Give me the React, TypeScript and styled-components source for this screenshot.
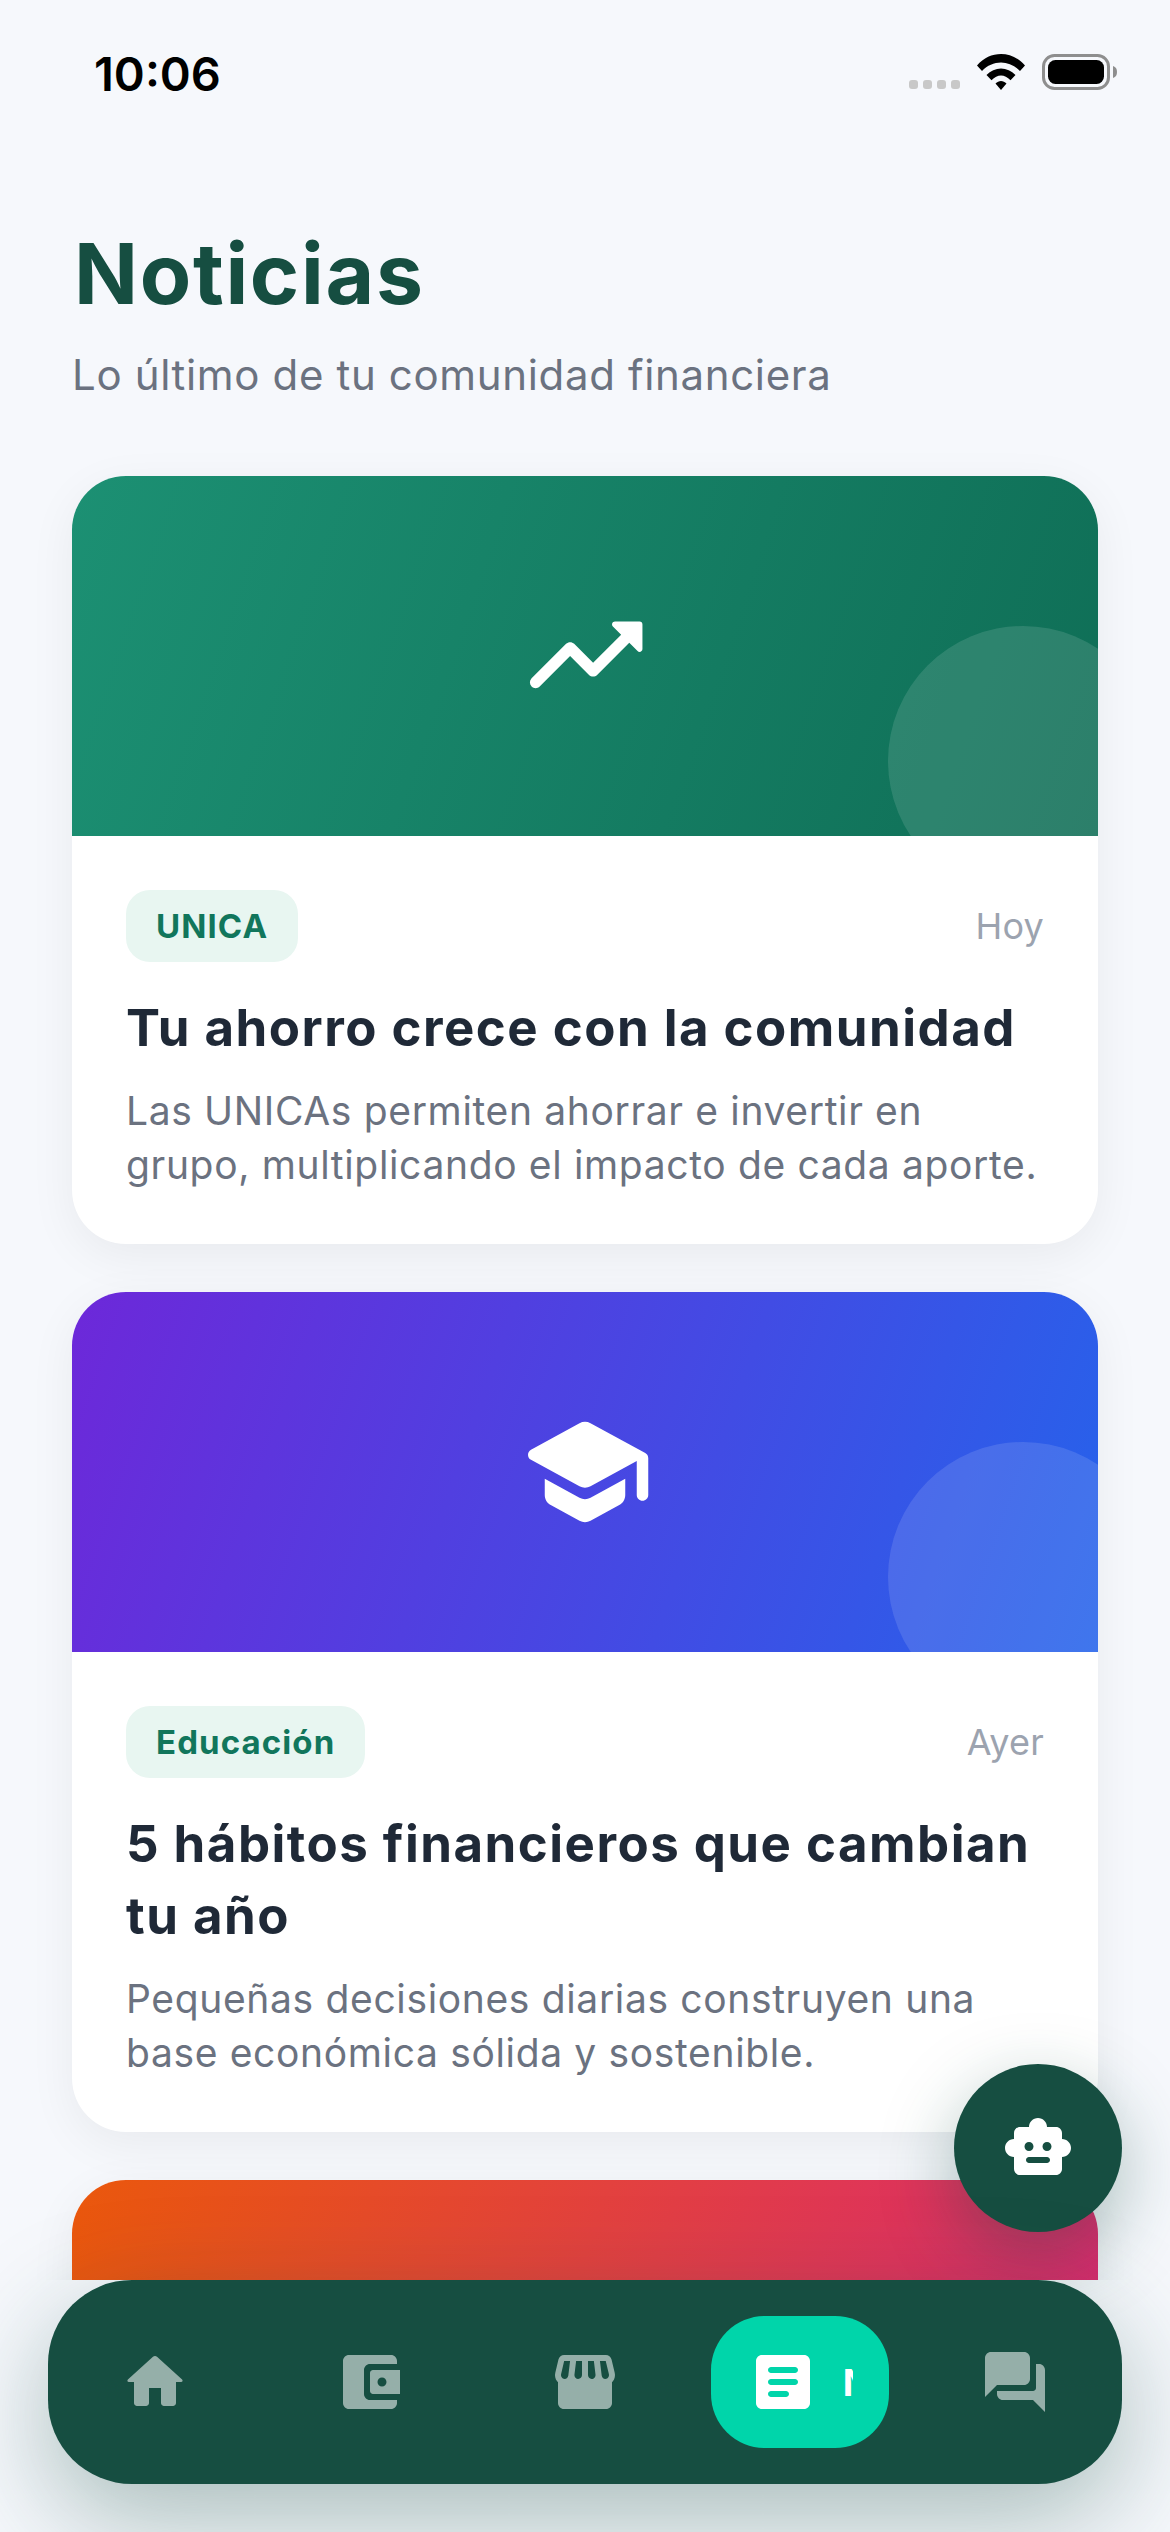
import React, { FC } from "react";
import styled, { createGlobalStyle } from "styled-components";

const FONT = `Inter, "Liberation Sans", sans-serif`;
const GREEN = "#164e41";

const GlobalStyle = createGlobalStyle`
  html, body {
    margin: 0;
    padding: 0;
    background: #f6f8fc;
  }
`;

const ICONS = {
  home: "M10 19v-5h4v5c0 .55.45 1 1 1h3c.55 0 1-.45 1-1v-7h1.7c.46 0 .68-.57.33-.87L12.67 3.6c-.38-.34-.96-.34-1.34 0l-8.36 7.53c-.34.3-.13.87.33.87H5v7c0 .55.45 1 1 1h3c.55 0 1-.45 1-1z",
  wallet:
    "M10 16V8c0-1.1.89-2 1.99-2H21V5c0-1.1-.9-2-2-2H5c-1.11 0-2 .9-2 2v14c0 1.1.89 2 2 2h14c1.1 0 2-.9 2-2v-1h-9.01C10.89 18 10 17.1 10 16zm3-8c-.55 0-1 .45-1 1v6c0 .55.45 1 1 1h9V8h-9zm3 5.5c-.83 0-1.5-.67-1.5-1.5s.67-1.5 1.5-1.5 1.5.67 1.5 1.5-.67 1.5-1.5 1.5z",
  store:
    "M21.9 8.89l-1.05-4.37c-.22-.9-1-1.52-1.91-1.52H5.05c-.9 0-1.69.63-1.9 1.52L2.1 8.89c-.24 1.02-.02 2.06.62 2.88.08.11.19.19.28.29V19c0 1.1.9 2 2 2h14c1.1 0 2-.9 2-2v-6.94c.09-.09.2-.18.28-.28.64-.82.87-1.87.62-2.89zm-2.99-3.9l1.05 4.37c.1.42.01.84-.25 1.17-.14.18-.44.47-.94.47-.61 0-1.14-.49-1.21-1.14L16.98 5l1.93-.01zM13 5h1.96l.54 4.52c.05.39-.07.78-.33 1.07-.22.26-.54.41-.95.41-.67 0-1.22-.59-1.22-1.31V5zM8.49 9.52L9.04 5H11v4.69c0 .72-.55 1.31-1.29 1.31-.34 0-.65-.15-.89-.41-.25-.29-.37-.68-.33-1.07zm-4.45-.16L5.05 5h1.97l-.58 4.86c-.08.65-.6 1.14-1.21 1.14-.49 0-.8-.29-.93-.47-.27-.32-.36-.75-.26-1.17z",
  article:
    "M19 3H5c-1.1 0-2 .9-2 2v14c0 1.1.9 2 2 2h14c1.1 0 2-.9 2-2V5c0-1.1-.9-2-2-2zm-6 14H8c-.55 0-1-.45-1-1s.45-1 1-1h5c.55 0 1 .45 1 1s-.45 1-1 1zm3-4H8c-.55 0-1-.45-1-1s.45-1 1-1h8c.55 0 1 .45 1 1s-.45 1-1 1zm0-4H8c-.55 0-1-.45-1-1s.45-1 1-1h8c.55 0 1 .45 1 1s-.45 1-1 1z",
  forum:
    "M20 6h-1v8c0 .55-.45 1-1 1H6v1c0 1.1.9 2 2 2h10l4 4V8c0-1.1-.9-2-2-2zm-3 5V4c0-1.1-.9-2-2-2H4c-1.1 0-2 .9-2 2v13l4-4h9c1.1 0 2-.9 2-2z",
  trending:
    "M16.85 6.85l1.44 1.44-4.88 4.88-3.29-3.29c-.39-.39-1.02-.39-1.41 0l-6 6.01c-.39.39-.39 1.02 0 1.41.39.39 1.02.39 1.41 0L9.41 12l3.29 3.29c.39.39 1.02.39 1.41 0l5.59-5.58 1.44 1.44c.31.31.85.09.85-.35V6.5c.01-.28-.21-.5-.49-.5h-4.29c-.45 0-.67.54-.36.85z",
  school:
    "M5 13.18v2.81c0 .73.4 1.41 1.04 1.76l5 2.73c.6.33 1.32.33 1.92 0l5-2.73c.64-.35 1.04-1.03 1.04-1.76v-2.81l-6.04 3.3c-.6.33-1.32.33-1.92 0L5 13.18zm6.04-9.66l-8.43 4.6c-.69.38-.69 1.38 0 1.76l8.43 4.6c.6.33 1.32.33 1.92 0L21 10.09V16c0 .55.45 1 1 1s1-.45 1-1V9.59c0-.37-.2-.7-.52-.88l-9.52-5.19c-.6-.32-1.32-.32-1.92 0z",
  bot: "M20 9V7c0-1.1-.9-2-2-2h-3c0-1.66-1.34-3-3-3S9 3.34 9 5H6c-1.1 0-2 .9-2 2v2c-1.66 0-3 1.34-3 3s1.34 3 3 3v4c0 1.1.9 2 2 2h12c1.1 0 2-.9 2-2v-4c1.66 0 3-1.34 3-3s-1.34-3-3-3zM7.5 11.5c0-.83.67-1.5 1.5-1.5s1.5.67 1.5 1.5S9.83 13 9 13s-1.5-.67-1.5-1.5zM15 17H9c-.55 0-1-.45-1-1s.45-1 1-1h6c.55 0 1 .45 1 1s-.45 1-1 1zm0-4c-.83 0-1.5-.67-1.5-1.5S14.17 10 15 10s1.5.67 1.5 1.5S15.83 13 15 13z",
};

type IconName = keyof typeof ICONS;

const Icon: FC<{ name: IconName; size: number; color: string }> = ({ name, size, color }) => (
  <svg width={size} height={size} viewBox="0 0 24 24" fill={color} style={{ flexShrink: 0 }}>
    <path d={ICONS[name]} />
  </svg>
);

const NEWS = [
  {
    tag: "UNICA",
    date: "Hoy",
    icon: "trending" as IconName,
    from: "#1c9073",
    to: "#0f6e56",
    title: "Tu ahorro crece con la comunidad",
    text: "Las UNICAs permiten ahorrar e invertir en grupo, multiplicando el impacto de cada aporte.",
  },
  {
    tag: "Educación",
    date: "Ayer",
    icon: "school" as IconName,
    from: "#6d28d9",
    to: "#2563eb",
    title: "5 hábitos financieros que cambian tu año",
    text: "Pequeñas decisiones diarias construyen una base económica sólida y sostenible.",
  },
];

const TABS: IconName[] = ["home", "wallet", "store", "article", "forum"];

const App: FC = () => {
  return (
    <Screen>
      <GlobalStyle />

      <StatusBar>
        <Clock>10:06</Clock>
        <StatusIcons>
          <SignalDots>
            <i />
            <i />
            <i />
            <i />
          </SignalDots>
          <svg width="48" height="36" viewBox="0 0 48 36">
            <path d="M0 11.5 C13 -3.8 35 -3.8 48 11.5 L43 17 C32.5 5.5 15.5 5.5 5 17 Z" fill="#000" />
            <path d="M9.5 21 C17.5 12.2 30.5 12.2 38.5 21 L33.5 26.3 C27.5 20 20.5 20 14.5 26.3 Z" fill="#000" />
            <path d="M18.5 29.5 C21.8 26 26.2 26 29.5 29.5 L24 36 Z" fill="#000" />
          </svg>
          <svg width="76" height="36" viewBox="0 0 76 36">
            <rect x="1.5" y="1.5" width="65" height="33" rx="11" fill="none" stroke="#8e8e8e" strokeWidth="3" />
            <rect x="6" y="6" width="56" height="24" rx="7.5" fill="#000" />
            <path d="M71 12 C74 13 75 15 75 18 C75 21 74 23 71 24 Z" fill="#8e8e8e" />
          </svg>
        </StatusIcons>
      </StatusBar>

      <Feed>
        <PageTitle>Noticias</PageTitle>
        <PageSubtitle>Lo último de tu comunidad financiera</PageSubtitle>

        {NEWS.map((item) => (
          <Card key={item.title}>
            <CardBanner $from={item.from} $to={item.to}>
              <BannerCircle />
              <Icon name={item.icon} size={138} color="#fff" />
            </CardBanner>
            <CardBody>
              <CardMeta>
                <Tag>{item.tag}</Tag>
                <DateText>{item.date}</DateText>
              </CardMeta>
              <CardTitle>{item.title}</CardTitle>
              <CardText>{item.text}</CardText>
            </CardBody>
          </Card>
        ))}

        {/* third card only shows its banner above the tab bar */}
        <Card>
          <CardBanner $from="#ea580c" $to="#db2777" />
        </Card>
      </Feed>

      <BotButton>
        <Icon name="bot" size={72} color="#fff" />
      </BotButton>

      <TabBar>
        {TABS.map((tab) => (
          <TabCell key={tab}>
            {tab === "article" ? (
              <ActiveTab>
                <Icon name={tab} size={72} color="#fff" />
                <ActiveLabel>Noticias</ActiveLabel>
              </ActiveTab>
            ) : (
              <Icon name={tab} size={72} color="rgba(255,255,255,0.55)" />
            )}
          </TabCell>
        ))}
      </TabBar>
    </Screen>
  );
};

export default App;

const Screen = styled.div`
  position: relative;
  width: 1170px;
  height: 2532px;
  overflow: hidden;
  display: flex;
  flex-direction: column;
  background: #f6f8fc;
  font-family: ${FONT};
`;

const StatusBar = styled.div`
  flex: none;
  height: 132px;
  padding: 54px 52px 0 94px;
  box-sizing: border-box;
  display: flex;
  justify-content: space-between;
  align-items: flex-start;
`;

const Clock = styled.div`
  font-size: 47px;
  line-height: 40px;
  font-weight: 600;
  color: #000;
`;

const StatusIcons = styled.div`
  display: flex;
  align-items: flex-end;
  gap: 17px;
`;

const SignalDots = styled.div`
  display: flex;
  gap: 5px;
  padding-bottom: 1px;

  i {
    display: block;
    width: 9px;
    height: 9px;
    border-radius: 3px;
    background: #c8c8c8;
  }
`;

const Feed = styled.div`
  flex: 1;
  min-height: 0;
  overflow: hidden;
  padding: 0 72px;
`;

const PageTitle = styled.h1`
  margin: 91px 0 0 2px;
  font-size: 84px;
  line-height: 102px;
  font-weight: 700;
  color: ${GREEN};
  letter-spacing: 1.7px;
`;

const PageSubtitle = styled.p`
  margin: 23px 0 74px;
  font-size: 42px;
  line-height: 54px;
  font-weight: 400;
  color: #6b7280;
  letter-spacing: 0.65px;
`;

const Card = styled.div`
  border-radius: 54px;
  overflow: hidden;
  background: #fff;
  margin-bottom: 48px;
  box-shadow: 0 12px 48px rgba(0, 0, 0, 0.06);
`;

/* corner to corner, 109deg is the diagonal of the 1026x360 banner */
const CardBanner = styled.div<{ $from: string; $to: string }>`
  position: relative;
  height: 360px;
  overflow: hidden;
  display: flex;
  align-items: center;
  justify-content: center;
  background: linear-gradient(109deg, ${(p) => p.$from}, ${(p) => p.$to});
`;

const BannerCircle = styled.div`
  position: absolute;
  right: -60px;
  bottom: -60px;
  width: 270px;
  height: 270px;
  border-radius: 50%;
  background: rgba(255, 255, 255, 0.12);
`;

const CardBody = styled.div`
  padding: 54px 54px 52px;
`;

const CardMeta = styled.div`
  display: flex;
  align-items: center;
  justify-content: space-between;
  margin-bottom: 30px;
`;

const Tag = styled.span`
  display: flex;
  align-items: center;
  height: 72px;
  padding: 0 30px;
  border-radius: 24px;
  background: #e8f6f1;
  color: #11765c;
  font-size: 33px;
  font-weight: 700;
  letter-spacing: 1.1px;
`;

const DateText = styled.span`
  font-size: 36px;
  color: #9ca3af;
  letter-spacing: 0.2px;
`;

const CardTitle = styled.h2`
  margin: 0 0 20px;
  font-size: 51px;
  line-height: 72px;
  font-weight: 700;
  color: #1f2937;
  letter-spacing: 1.47px;
`;

const CardText = styled.p`
  margin: 0;
  font-size: 39px;
  line-height: 54px;
  color: #6b7280;
  letter-spacing: 0.65px;
`;

const BotButton = styled.div`
  position: absolute;
  left: 954px;
  top: 2064px;
  width: 168px;
  height: 168px;
  border-radius: 50%;
  background: ${GREEN};
  display: flex;
  align-items: center;
  justify-content: center;
  box-shadow: 0 24px 72px rgba(22, 78, 65, 0.35);
`;

const TabBar = styled.nav`
  position: relative;
  flex: none;
  height: 204px;
  margin: 0 48px 48px;
  border-radius: 84px;
  background: ${GREEN};
  display: grid;
  grid-template-columns: repeat(5, 1fr);
  box-shadow: 0 36px 108px rgba(22, 78, 65, 0.35);
`;

const TabCell = styled.div`
  display: flex;
  align-items: center;
  justify-content: center;
`;

const ActiveTab = styled.div`
  width: 178px;
  height: 132px;
  box-sizing: border-box;
  padding: 0 36px;
  border-radius: 54px;
  background: #00d5aa;
  display: flex;
  align-items: center;
  gap: 24px;
  flex-shrink: 0;
`;

const ActiveLabel = styled.span`
  min-width: 0;
  overflow: hidden;
  white-space: nowrap;
  color: #fff;
  font-size: 37px;
  font-weight: 700;
`;
